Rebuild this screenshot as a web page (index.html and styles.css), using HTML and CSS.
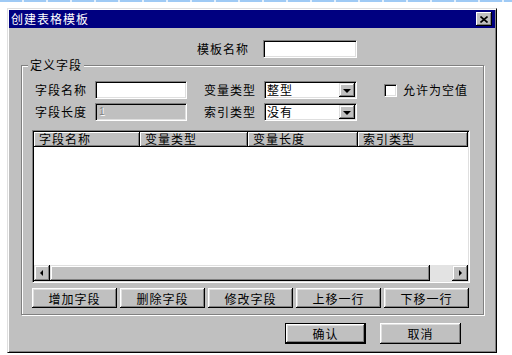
FILE: index.html
```html
<!DOCTYPE html>
<html lang="zh-CN">
  <head>
    <meta charset="UTF-8" />
    <meta name="viewport" content="width=device-width, initial-scale=1.0" />
    <title>创建表格模板</title>
    <link rel="stylesheet" href="styles.css">
  </head>
  <body>
    <div class="topline"></div>
    <div class="dialog">
      <div class="titlebar">
        <span class="title">创建表格模板</span>
        <span class="close">
          <svg width="8" height="7" viewBox="0 0 8 7">
            <path d="M0.5 0.5 L7.5 6.5 M7.5 0.5 L0.5 6.5" stroke="#000" stroke-width="1.6" fill="none" />
          </svg>
        </span>
      </div>

      <div class="name-row">
        <label class="lbl">模板名称</label>
        <span class="field w94"></span>
      </div>

      <fieldset class="group">
        <legend>定义字段</legend>

        <div class="row">
          <label class="lbl">字段名称</label>
          <span class="field w92"></span>
          <label class="lbl lbl-mid">变量类型</label>
          <div class="combo"><span class="combo-text">整型</span><span class="drop"><i></i></span></div>
          <label class="check"><span class="box"></span>允许为空值</label>
        </div>

        <div class="row row-2">
          <label class="lbl">字段长度</label>
          <span class="field w92 disabled">1</span>
          <label class="lbl lbl-mid">索引类型</label>
          <div class="combo"><span class="combo-text">没有</span><span class="drop"><i></i></span></div>
        </div>

        <div class="list">
          <div class="list-head">
            <span class="col c1">字段名称</span>
            <span class="col c2">变量类型</span>
            <span class="col c3">变量长度</span>
            <span class="col c4">索引类型</span>
          </div>
          <div class="list-body"></div>
          <div class="hscroll">
            <span class="sb-btn"><i class="arr-left"></i></span>
            <span class="thumb"></span>
            <span class="track"></span>
            <span class="sb-btn"><i class="arr-right"></i></span>
          </div>
        </div>

        <div class="btn-row">
          <button type="button" class="btn">增加字段</button>
          <button type="button" class="btn">删除字段</button>
          <button type="button" class="btn">修改字段</button>
          <button type="button" class="btn">上移一行</button>
          <button type="button" class="btn">下移一行</button>
        </div>
      </fieldset>

      <div class="footer">
        <button type="button" class="btn btn-foot default">确认</button>
        <button type="button" class="btn btn-foot">取消</button>
      </div>
    </div>
  </body>
</html>
```

FILE: styles.css
```css
body {
  margin: 0;
  background: #fff;
  font-family: "Noto Sans CJK SC", "DejaVu Sans", sans-serif;
  font-size: 12px;
  color: #000;
  overflow: hidden;
}
.topline {
  height: 2px;
  background: repeating-linear-gradient(90deg, #9fcaf5 0 22px, #e4f0fc 22px 24px);
}
.dialog {
  margin: 6px 0 0 7px;
  width: 490px;
  height: 345px;
  box-sizing: border-box;
  background: #c0c0c0;
  border: 1px solid;
  border-color: #dfdfdf #000 #000 #dfdfdf;
  box-shadow: inset 1px 1px 0 #fff, inset -1px -1px 0 #808080;
  padding: 1px;
}
.titlebar {
  height: 18px;
  background: #000080;
  color: #fff;
  display: flex;
  align-items: center;
  justify-content: space-between;
  padding: 0 2px 0 2px;
}
.title {
  letter-spacing: 1px;
  line-height: 18px;
}
.close {
  width: 16px;
  height: 14px;
  box-sizing: border-box;
  background: #c0c0c0;
  display: flex;
  align-items: center;
  justify-content: center;
  box-shadow: inset -1px -1px 0 #000, inset 1px 1px 0 #fff, inset -2px -2px 0 #808080;
  margin-right: 1px;
}
.lbl {
  letter-spacing: 1px;
  line-height: 18px;
  white-space: nowrap;
}
.field {
  display: inline-block;
  height: 18px;
  box-sizing: border-box;
  background: #fff;
  border: 1px solid;
  border-color: #808080 #fff #fff #808080;
  box-shadow: inset 1px 1px 0 #000, inset -1px -1px 0 #dfdfdf;
  padding-left: 3px;
  font-family: "Liberation Sans", sans-serif;
  font-size: 10px;
  line-height: 16px;
}
.w94 { width: 94px; }
.w92 { width: 92px; }
.field.disabled {
  background: #c0c0c0;
  color: #808080;
  text-shadow: 1px 1px 0 #fff;
}
.name-row {
  display: flex;
  margin-top: 12px;
  padding-left: 188px;
}
.name-row .lbl {
  margin-right: 14px;
}
.group {
  margin: 0 11px 0 12px;
  padding: 9px 0 6px 0;
  border: 1px solid #808080;
  box-shadow: 1px 1px 0 #fff, inset 1px 1px 0 #fff;
  min-width: 0;
}
.group legend {
  margin-left: 6px;
  padding: 0 2px;
  line-height: 14px;
  letter-spacing: 1px;
  background: #c0c0c0;
}
.row {
  display: flex;
  align-items: center;
  padding-left: 13px;
}
.row-2 {
  margin-top: 4px;
}
.row .lbl {
  width: 52px;
  margin-right: 8px;
}
.row .lbl-mid {
  margin-left: 17px;
}
.combo {
  width: 93px;
  height: 18px;
  box-sizing: border-box;
  background: #fff;
  border: 1px solid;
  border-color: #808080 #fff #fff #808080;
  box-shadow: inset 1px 1px 0 #000, inset -1px -1px 0 #dfdfdf;
  display: flex;
  align-items: center;
  justify-content: space-between;
  padding: 1px 1px 1px 2px;
}
.combo-text {
  letter-spacing: 1px;
  line-height: 14px;
}
.drop {
  width: 16px;
  height: 14px;
  box-sizing: border-box;
  background: #c0c0c0;
  box-shadow: inset -1px -1px 0 #000, inset 1px 1px 0 #dfdfdf, inset -2px -2px 0 #808080, inset 2px 2px 0 #fff;
  display: flex;
  align-items: center;
  justify-content: center;
}
.drop i {
  width: 0;
  height: 0;
  border-left: 4px solid transparent;
  border-right: 4px solid transparent;
  border-top: 4px solid #000;
  margin: 1px 1px 0 0;
}
.check {
  display: flex;
  align-items: center;
  margin-left: 27px;
  letter-spacing: 1px;
  line-height: 18px;
}
.box {
  width: 13px;
  height: 13px;
  box-sizing: border-box;
  background: #fff;
  border: 1px solid;
  border-color: #808080 #fff #fff #808080;
  box-shadow: inset 1px 1px 0 #000, inset -1px -1px 0 #dfdfdf;
  margin-right: 6px;
}
.list {
  margin: 9px 0 0 10px;
  width: 438px;
  box-sizing: border-box;
  border: 1px solid;
  border-color: #808080 #fff #fff #808080;
  box-shadow: inset 1px 1px 0 #000, inset -1px -1px 0 #dfdfdf;
  padding: 1px;
  display: flex;
  flex-direction: column;
}
.list-head {
  display: flex;
  height: 15px;
}
.col {
  box-sizing: border-box;
  background: #c0c0c0;
  box-shadow: inset -1px -1px 0 #000, inset 1px 1px 0 #fff, inset -2px -2px 0 #808080;
  padding-left: 5px;
  letter-spacing: 1px;
  line-height: 14px;
  white-space: nowrap;
}
.c1 { width: 106px; }
.c2 { width: 108px; }
.c3 { width: 110px; }
.c4 { flex: 1; }
.list-body {
  height: 118px;
  background: #fff;
}
.hscroll {
  display: flex;
  height: 16px;
}
.sb-btn {
  width: 16px;
  height: 16px;
  box-sizing: border-box;
  background: #c0c0c0;
  box-shadow: inset -1px -1px 0 #000, inset 1px 1px 0 #dfdfdf, inset -2px -2px 0 #808080, inset 2px 2px 0 #fff;
  display: flex;
  align-items: center;
  justify-content: center;
}
.arr-left {
  border-top: 3px solid transparent;
  border-bottom: 3px solid transparent;
  border-right: 3px solid #000;
  margin-right: 1px;
}
.arr-right {
  border-top: 3px solid transparent;
  border-bottom: 3px solid transparent;
  border-left: 3px solid #000;
  margin-left: 1px;
}
.thumb {
  width: 380px;
  height: 16px;
  box-sizing: border-box;
  background: #c0c0c0;
  box-shadow: inset -1px -1px 0 #000, inset 1px 1px 0 #dfdfdf, inset -2px -2px 0 #808080, inset 2px 2px 0 #fff;
}
.track {
  flex: 1;
  background: #e3e3e3;
}
.btn-row {
  display: flex;
  gap: 3px;
  margin: 5px 0 0 10px;
}
.btn {
  width: 85px;
  height: 20px;
  box-sizing: border-box;
  padding: 0;
  border: none;
  background: #c0c0c0;
  box-shadow: inset -1px -1px 0 #000, inset 1px 1px 0 #fff, inset -2px -2px 0 #808080, inset 2px 2px 0 #dfdfdf;
  font-family: inherit;
  font-size: 12px;
  letter-spacing: 1px;
  color: #000;
}
.footer {
  display: flex;
  justify-content: flex-end;
  gap: 14px;
  margin-top: 8px;
  padding-right: 34px;
}
.btn-foot {
  width: 81px;
  height: 21px;
}
.btn.default {
  border: 1px solid #000;
}
```
